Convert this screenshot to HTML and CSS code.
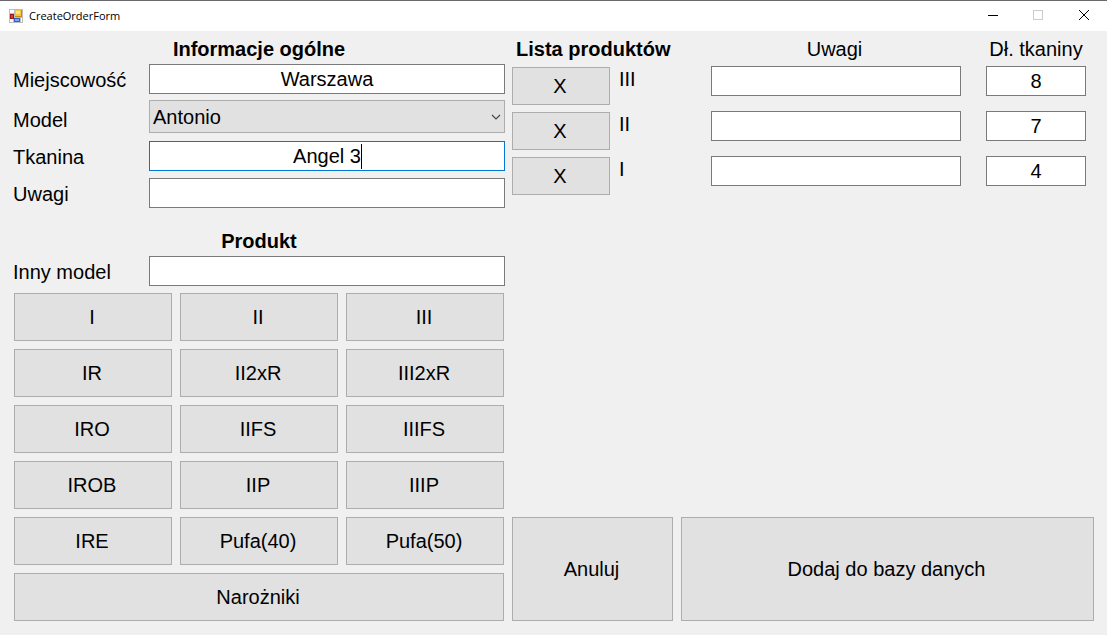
FILE: index.html
```html
<!DOCTYPE html>
<html lang="pl">
<head>
<meta charset="utf-8">
<title>CreateOrderForm</title>
<link rel="stylesheet" href="styles.css">
</head>
<body>
<div class="window">
  <header class="titlebar">
    <svg class="app-icon" width="14" height="14" viewBox="0 0 14 14" shape-rendering="crispEdges" aria-hidden="true">
      <rect width="14" height="14" fill="#bdbdbd"/>
      <rect x="1" y="1" width="4" height="3" fill="#fff"/>
      <rect x="1" y="10" width="3" height="3" fill="#fff"/>
      <rect x="12" y="9" width="1" height="4" fill="#fff"/>
      <rect x="1" y="5" width="4" height="5" fill="#9c1810"/>
      <rect x="2" y="6" width="2" height="3" fill="#d8402c"/>
      <rect x="6" y="1" width="7" height="7" fill="#c98a10"/>
      <rect x="6" y="1" width="6" height="6" fill="#f7c53c"/>
      <rect x="7" y="2" width="4" height="3" fill="#ffe587"/>
      <rect x="5" y="9" width="6" height="4" fill="#2f62cf"/>
      <rect x="6" y="10" width="4" height="2" fill="#78a8f5"/>
    </svg>
    <h1 class="title">CreateOrderForm</h1>
    <div class="controls">
      <button class="control" type="button" aria-label="Minimalizuj">
        <svg width="12" height="12" viewBox="0 0 12 12" shape-rendering="crispEdges"><rect x="2" y="5" width="10" height="1" fill="#000"/></svg>
      </button>
      <button class="control" type="button" aria-label="Maksymalizuj" disabled>
        <svg width="12" height="12" viewBox="0 0 12 12"><rect x="1.5" y="0.5" width="9" height="9" fill="none" stroke="#ccc"/></svg>
      </button>
      <button class="control" type="button" aria-label="Zamknij">
        <svg width="12" height="12" viewBox="0 0 12 12"><path d="M1 0l10 10M11 0L1 10" fill="none" stroke="#000"/></svg>
      </button>
    </div>
  </header>

  <main class="content">
    <section class="order">
      <h2 class="heading">Informacje ogólne</h2>
      <div class="fields">
        <label class="label" for="city">Miejscowość</label>
        <input class="input" id="city" type="text" value="Warszawa">
        <label class="label" for="model">Model</label>
        <div class="select-box">
          <select class="select" id="model"><option>Antonio</option></select>
          <svg class="chevron" width="10" height="6" viewBox="0 0 10 6" aria-hidden="true"><path d="M1 1l4 4 4-4" fill="none" stroke="#444" stroke-width="1.1"/></svg>
        </div>
        <label class="label" for="fabric">Tkanina</label>
        <input class="input input-active" id="fabric" type="text" value="Angel 3">
        <label class="label" for="notes">Uwagi</label>
        <input class="input" id="notes" type="text">
      </div>

      <h2 class="heading heading-product">Produkt</h2>
      <div class="fields">
        <label class="label" for="other">Inny model</label>
        <input class="input" id="other" type="text">
      </div>

      <div class="products">
        <button class="button" type="button">I</button>
        <button class="button" type="button">II</button>
        <button class="button" type="button">III</button>
        <button class="button" type="button">IR</button>
        <button class="button" type="button">II2xR</button>
        <button class="button" type="button">III2xR</button>
        <button class="button" type="button">IRO</button>
        <button class="button" type="button">IIFS</button>
        <button class="button" type="button">IIIFS</button>
        <button class="button" type="button">IROB</button>
        <button class="button" type="button">IIP</button>
        <button class="button" type="button">IIIP</button>
        <button class="button" type="button">IRE</button>
        <button class="button" type="button">Pufa(40)</button>
        <button class="button" type="button">Pufa(50)</button>
        <button class="button button-wide" type="button">Narożniki</button>
      </div>
    </section>

    <section class="summary">
      <table class="list">
        <colgroup><col class="col-remove"><col class="col-name"><col><col class="col-length"></colgroup>
        <thead>
          <tr>
            <th class="list-title" colspan="2">Lista produktów</th>
            <th class="notes-title">Uwagi</th>
            <th class="length-title">Dł. tkaniny</th>
          </tr>
        </thead>
        <tbody>
          <tr>
            <td><button class="button remove" type="button">X</button></td>
            <td>III</td>
            <td class="notes-cell"><input class="input" type="text" aria-label="Uwagi, III"></td>
            <td class="length-cell"><input class="input" type="text" aria-label="Dł. tkaniny, III" value="8"></td>
          </tr>
          <tr>
            <td><button class="button remove" type="button">X</button></td>
            <td>II</td>
            <td class="notes-cell"><input class="input" type="text" aria-label="Uwagi, II"></td>
            <td class="length-cell"><input class="input" type="text" aria-label="Dł. tkaniny, II" value="7"></td>
          </tr>
          <tr>
            <td><button class="button remove" type="button">X</button></td>
            <td>I</td>
            <td class="notes-cell"><input class="input" type="text" aria-label="Uwagi, I"></td>
            <td class="length-cell"><input class="input" type="text" aria-label="Dł. tkaniny, I" value="4"></td>
          </tr>
        </tbody>
      </table>
      <div class="actions">
        <button class="button" type="button">Anuluj</button>
        <button class="button" type="button">Dodaj do bazy danych</button>
      </div>
    </section>
  </main>
</div>
</body>
</html>
```
FILE: styles.css
```css
* {
  box-sizing: border-box;
}

body {
  margin: 0;
  background: #f0f0f0;
  color: #000;
  font: 20px/28px "Liberation Sans", Arial, sans-serif;
}

.window {
  display: flex;
  flex-direction: column;
  min-height: 100vh;
}

.titlebar {
  display: flex;
  align-items: center;
  height: 31px;
  padding-left: 9px;
  border-top: 1px solid #6b696b;
  background: #fff;
}

.title {
  margin: 0 auto 0 6px;
  font: 11px/16px "Open Sans", "Noto Sans", sans-serif;
}

.controls {
  display: flex;
}

.control {
  display: flex;
  align-items: center;
  justify-content: center;
  width: 46px;
  height: 28px;
  padding: 0;
  border: 0;
  background: none;
}

.content {
  display: grid;
  grid-template-columns: 492fr 582fr;
  column-gap: 7px;
  flex: 1;
  padding: 4px 13px 14px;
}

.heading {
  margin: 0 0 1px;
  font-size: 20px;
  line-height: 28px;
  text-align: center;
}

.heading-product {
  margin-top: 19px;
}

.fields {
  display: grid;
  grid-template-columns: 136px 1fr;
  row-gap: 7px;
}

.label {
  align-self: end;
}

.input {
  display: block;
  width: 100%;
  height: 30px;
  padding: 0 2px;
  border: 1px solid #7a7a7a;
  border-radius: 0;
  outline: 0;
  background: #fff;
  color: inherit;
  font: inherit;
  text-align: center;
}

.input-active {
  border-color: #0078d7;
  background: linear-gradient(#000, #000) calc(50% + 34px) 50% / 1px 25px no-repeat #fff;
}

.select-box {
  position: relative;
  height: 33px;
}

.select {
  display: block;
  appearance: none;
  width: 100%;
  height: 33px;
  margin-top: -1px;
  padding: 0 24px 0 3px;
  border: 1px solid #adadad;
  border-radius: 0;
  background: #e1e1e1;
  color: inherit;
  font: inherit;
}

.chevron {
  position: absolute;
  top: 13px;
  right: 4px;
  pointer-events: none;
}

.button {
  padding: 0 2px 0 0;
  border: 1px solid #adadad;
  border-radius: 0;
  background: #e1e1e1;
  color: inherit;
  font: inherit;
}

.products {
  display: grid;
  grid-template-columns: repeat(3, 1fr);
  grid-auto-rows: 48px;
  gap: 8px;
  margin: 7px 1px 0;
}

.button-wide {
  grid-column: 1 / -1;
}

.summary {
  display: flex;
  flex-direction: column;
  justify-content: space-between;
}

.list {
  width: 100%;
  table-layout: fixed;
  border-collapse: collapse;
}

.col-remove {
  width: 107px;
}

.col-name {
  width: 92px;
}

.col-length {
  width: 108px;
}

.list th {
  height: 31px;
  padding: 0;
  font-weight: normal;
  vertical-align: top;
}

.list td {
  height: 45px;
  padding: 0;
  line-height: 26px;
  vertical-align: top;
}

.list .list-title {
  padding-left: 4px;
  font-weight: bold;
  text-align: left;
}

.list .notes-title {
  padding-right: 28px;
}

.list .notes-cell {
  padding-right: 25px;
}

.list .length-title,
.list .length-cell {
  padding-right: 8px;
}

.remove {
  display: block;
  width: 98px;
  height: 38px;
  margin-top: 1px;
}

.actions {
  display: grid;
  grid-template-columns: 161fr 413fr;
  gap: 8px;
  height: 104px;
}
```
